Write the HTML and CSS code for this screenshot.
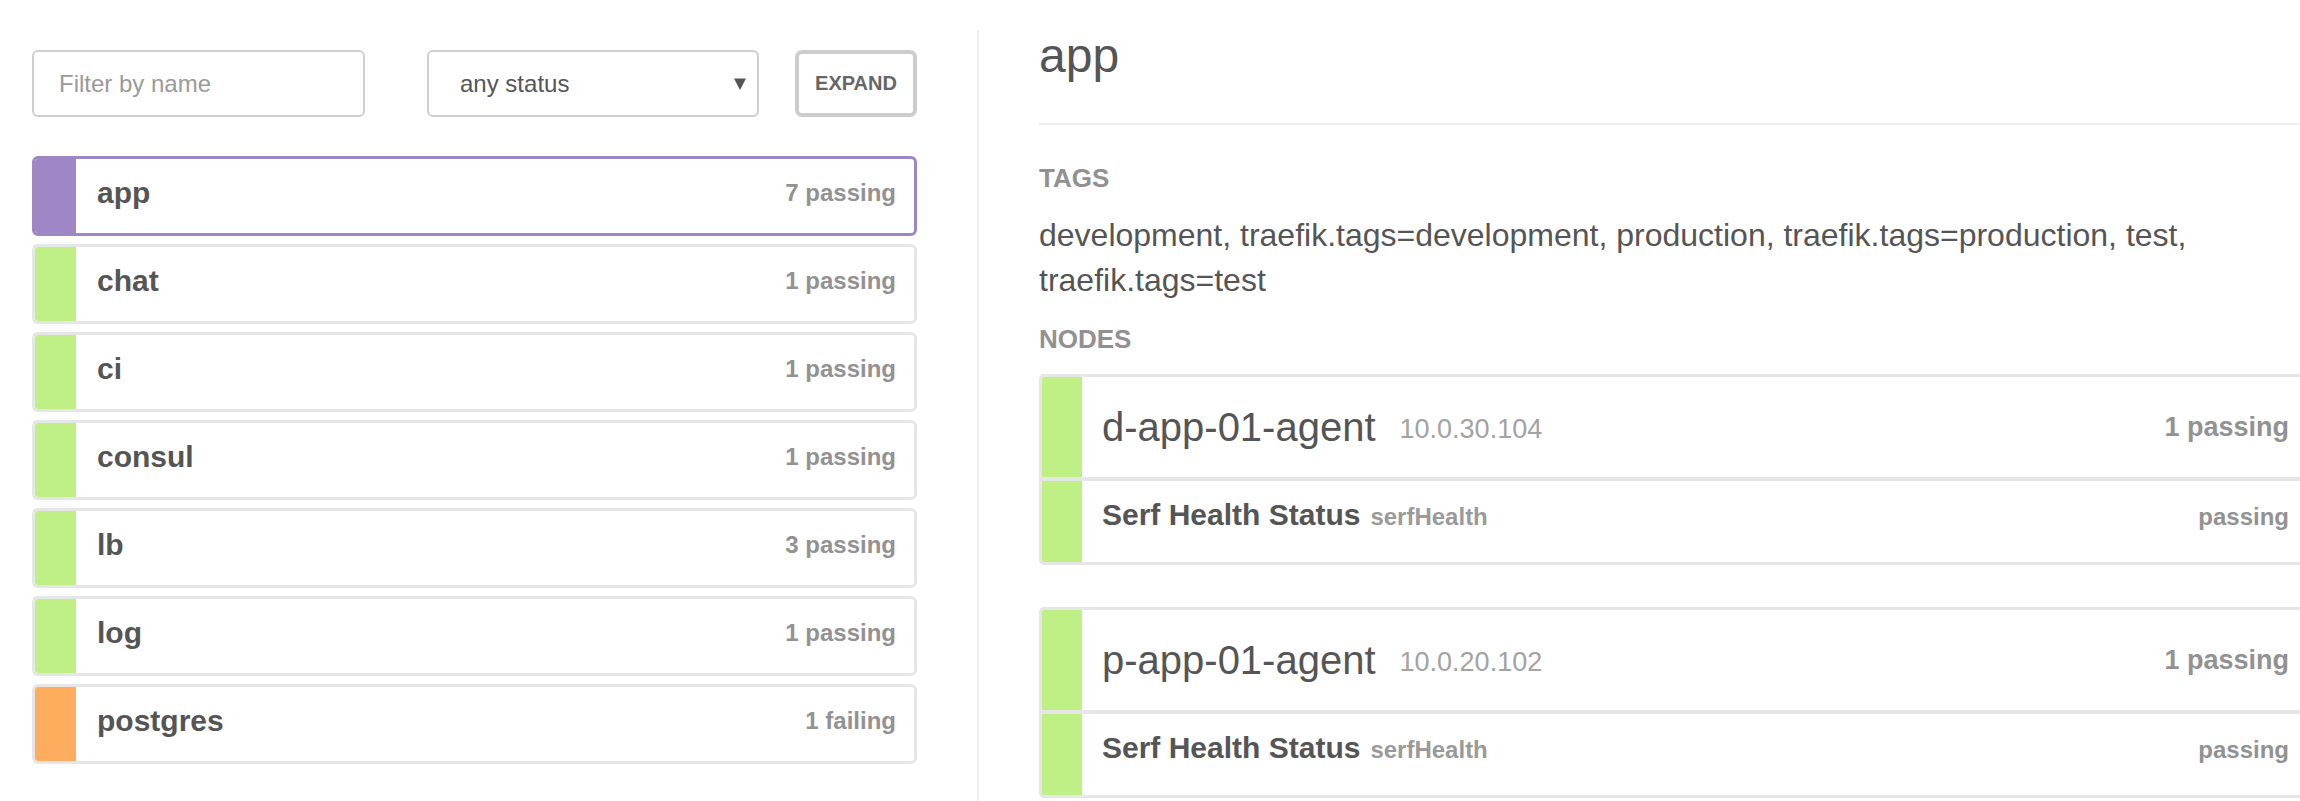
FILE: index.html
```html
<!DOCTYPE html>
<html lang="en">
<head>
<meta charset="utf-8">
<title>Services - app</title>
<link rel="stylesheet" href="styles.css">
</head>
<body>
<div class="page">
  <aside class="sidebar">
    <div class="filters">
      <input class="filter-input" type="text" placeholder="Filter by name">
      <div class="select-wrap">
        <select class="status-select">
          <option>any status</option>
        </select>
        <svg class="caret" width="12" height="12" viewBox="0 0 12 12"><polygon points="0,0.5 12,0.5 6,12" fill="#555"/></svg>
      </div>
      <button class="expand" type="button">Expand</button>
    </div>
    <ul class="service-list">
      <li class="service active"><span class="bar bar-purple"></span><span class="service-name">app</span><span class="service-count">7 passing</span></li>
      <li class="service"><span class="bar bar-green"></span><span class="service-name">chat</span><span class="service-count">1 passing</span></li>
      <li class="service"><span class="bar bar-green"></span><span class="service-name">ci</span><span class="service-count">1 passing</span></li>
      <li class="service"><span class="bar bar-green"></span><span class="service-name">consul</span><span class="service-count">1 passing</span></li>
      <li class="service"><span class="bar bar-green"></span><span class="service-name">lb</span><span class="service-count">3 passing</span></li>
      <li class="service"><span class="bar bar-green"></span><span class="service-name">log</span><span class="service-count">1 passing</span></li>
      <li class="service"><span class="bar bar-orange"></span><span class="service-name">postgres</span><span class="service-count">1 failing</span></li>
    </ul>
  </aside>
  <main class="detail">
    <h1 class="detail-title">app</h1>
    <hr class="rule">
    <h4 class="section-label">TAGS</h4>
    <p class="tags">development, traefik.tags=development, production, traefik.tags=production, test, traefik.tags=test</p>
    <h4 class="section-label">NODES</h4>

    <div class="node-card">
      <div class="node-head">
        <span class="bar bar-green node-bar"></span>
        <div class="node-head-body">
          <span class="node-name">d-app-01-agent</span>
          <span class="node-ip">10.0.30.104</span>
          <span class="node-count">1 passing</span>
        </div>
      </div>
      <div class="check-row">
        <span class="bar bar-green node-bar"></span>
        <div class="check-body">
          <span class="check-name">Serf Health Status</span>
          <span class="check-id">serfHealth</span>
          <span class="check-status">passing</span>
        </div>
      </div>
    </div>

    <div class="node-card">
      <div class="node-head">
        <span class="bar bar-green node-bar"></span>
        <div class="node-head-body">
          <span class="node-name">p-app-01-agent</span>
          <span class="node-ip">10.0.20.102</span>
          <span class="node-count">1 passing</span>
        </div>
      </div>
      <div class="check-row">
        <span class="bar bar-green node-bar"></span>
        <div class="check-body">
          <span class="check-name">Serf Health Status</span>
          <span class="check-id">serfHealth</span>
          <span class="check-status">passing</span>
        </div>
      </div>
    </div>
  </main>
</div>
</body>
</html>
```

FILE: styles.css
```css
html, body {
  margin: 0;
  padding: 0;
  overflow: hidden;
  background: #fff;
}

body {
  font-family: "Liberation Sans", Arial, Helvetica, sans-serif;
  color: #555;
}

.page {
  display: flex;
  align-items: flex-start;
  padding-top: 30px;
  min-height: 771px;
}

/* ---------- sidebar ---------- */
.sidebar {
  flex: 0 0 885px;
  width: 885px;
  margin-left: 32px;
  margin-right: 60px;
  padding-top: 20px;
}

.filters {
  display: flex;
  align-items: stretch;
  height: 67px;
}

.filter-input {
  box-sizing: border-box;
  width: 333px;
  height: 67px;
  margin: 0 62px 0 0;
  padding: 0 0 0 25px;
  border: 2px solid #cfcfcf;
  border-radius: 6px;
  font-family: inherit;
  font-size: 24px;
  color: #555;
  outline: none;
}

.filter-input::placeholder {
  color: #9a9a9a;
}

.select-wrap {
  position: relative;
  width: 332px;
  height: 67px;
  margin-right: 36px;
}

.status-select {
  -webkit-appearance: none;
  appearance: none;
  box-sizing: border-box;
  width: 100%;
  height: 100%;
  margin: 0;
  padding: 0 0 0 31px;
  border: 2px solid #cfcfcf;
  border-radius: 6px;
  background: #fff;
  font-family: inherit;
  font-size: 24px;
  color: #555;
  outline: none;
}

.caret {
  position: absolute;
  right: 13px;
  top: 28px;
  pointer-events: none;
}

.expand {
  box-sizing: border-box;
  width: 122px;
  height: 67px;
  margin: 0;
  padding: 0;
  border: 4px solid #cdcdcd;
  border-radius: 7px;
  background: #fff;
  font-family: inherit;
  font-size: 20px;
  font-weight: bold;
  text-transform: uppercase;
  color: #666;
}

.service-list {
  list-style: none;
  margin: 39px 0 0;
  padding: 0;
}

.service {
  box-sizing: border-box;
  display: flex;
  align-items: flex-start;
  height: 80px;
  margin-bottom: 8px;
  border: 3px solid #e6e6e6;
  border-radius: 6px;
  overflow: hidden;
  background: #fff;
}

.service.active {
  border-color: #9f86c4;
}

.bar {
  display: block;
  flex: 0 0 41px;
  align-self: stretch;
}

.bar-green { background: #bef085; }
.bar-orange { background: #feac5e; }
.bar-purple { background: #9f86c4; }

.service-name {
  margin-left: 21px;
  padding-top: 13px;
  font-size: 30px;
  line-height: 42px;
  font-weight: bold;
  color: #555;
}

.service-count {
  margin-left: auto;
  padding-right: 18px;
  padding-top: 16px;
  font-size: 24px;
  line-height: 36px;
  font-weight: bold;
  color: #929292;
}

/* ---------- detail ---------- */
.detail {
  flex: 0 0 auto;
  width: 1271px;
  min-height: 900px;
  padding-left: 60px;
  border-left: 2px solid #eeeeee;
}

.detail-title {
  margin: 0;
  font-size: 48px;
  line-height: 52px;
  font-weight: normal;
  color: #555;
}

.rule {
  height: 2px;
  margin: 41px 0 38px;
  border: 0;
  background: #eeeeee;
}

.section-label {
  margin: 0 0 20px;
  font-size: 26px;
  line-height: 30px;
  font-weight: bold;
  color: #919191;
}

.tags {
  margin: 0 0 21px;
  font-size: 32px;
  line-height: 45px;
  color: #555;
}

.node-card {
  border: 3px solid #e6e6e6;
  border-radius: 5px;
  overflow: hidden;
  margin-bottom: 42px;
  background: #fff;
}

.node-head {
  display: flex;
  height: 100px;
}

.node-bar {
  flex: 0 0 40px;
}

.node-head-body {
  flex: 1;
  display: flex;
  align-items: center;
  padding: 0 18px 0 20px;
}

.node-name {
  font-size: 40px;
  color: #555;
}

.node-ip {
  margin-left: 24px;
  padding-top: 4px;
  font-size: 27px;
  color: #a3a3a3;
}

.node-count {
  margin-left: auto;
  font-size: 27px;
  font-weight: bold;
  color: #929292;
}

.check-row {
  display: flex;
  height: 81px;
  border-top: 4px solid #e6e6e6;
}

.check-body {
  flex: 1;
  display: flex;
  align-items: baseline;
  padding: 13px 18px 0 20px;
  line-height: 42px;
}

.check-name {
  font-size: 30px;
  font-weight: bold;
  color: #555;
}

.check-id {
  margin-left: 10px;
  font-size: 24px;
  font-weight: bold;
  color: #9a9a9a;
}

.check-status {
  margin-left: auto;
  font-size: 24px;
  font-weight: bold;
  color: #929292;
}
```
